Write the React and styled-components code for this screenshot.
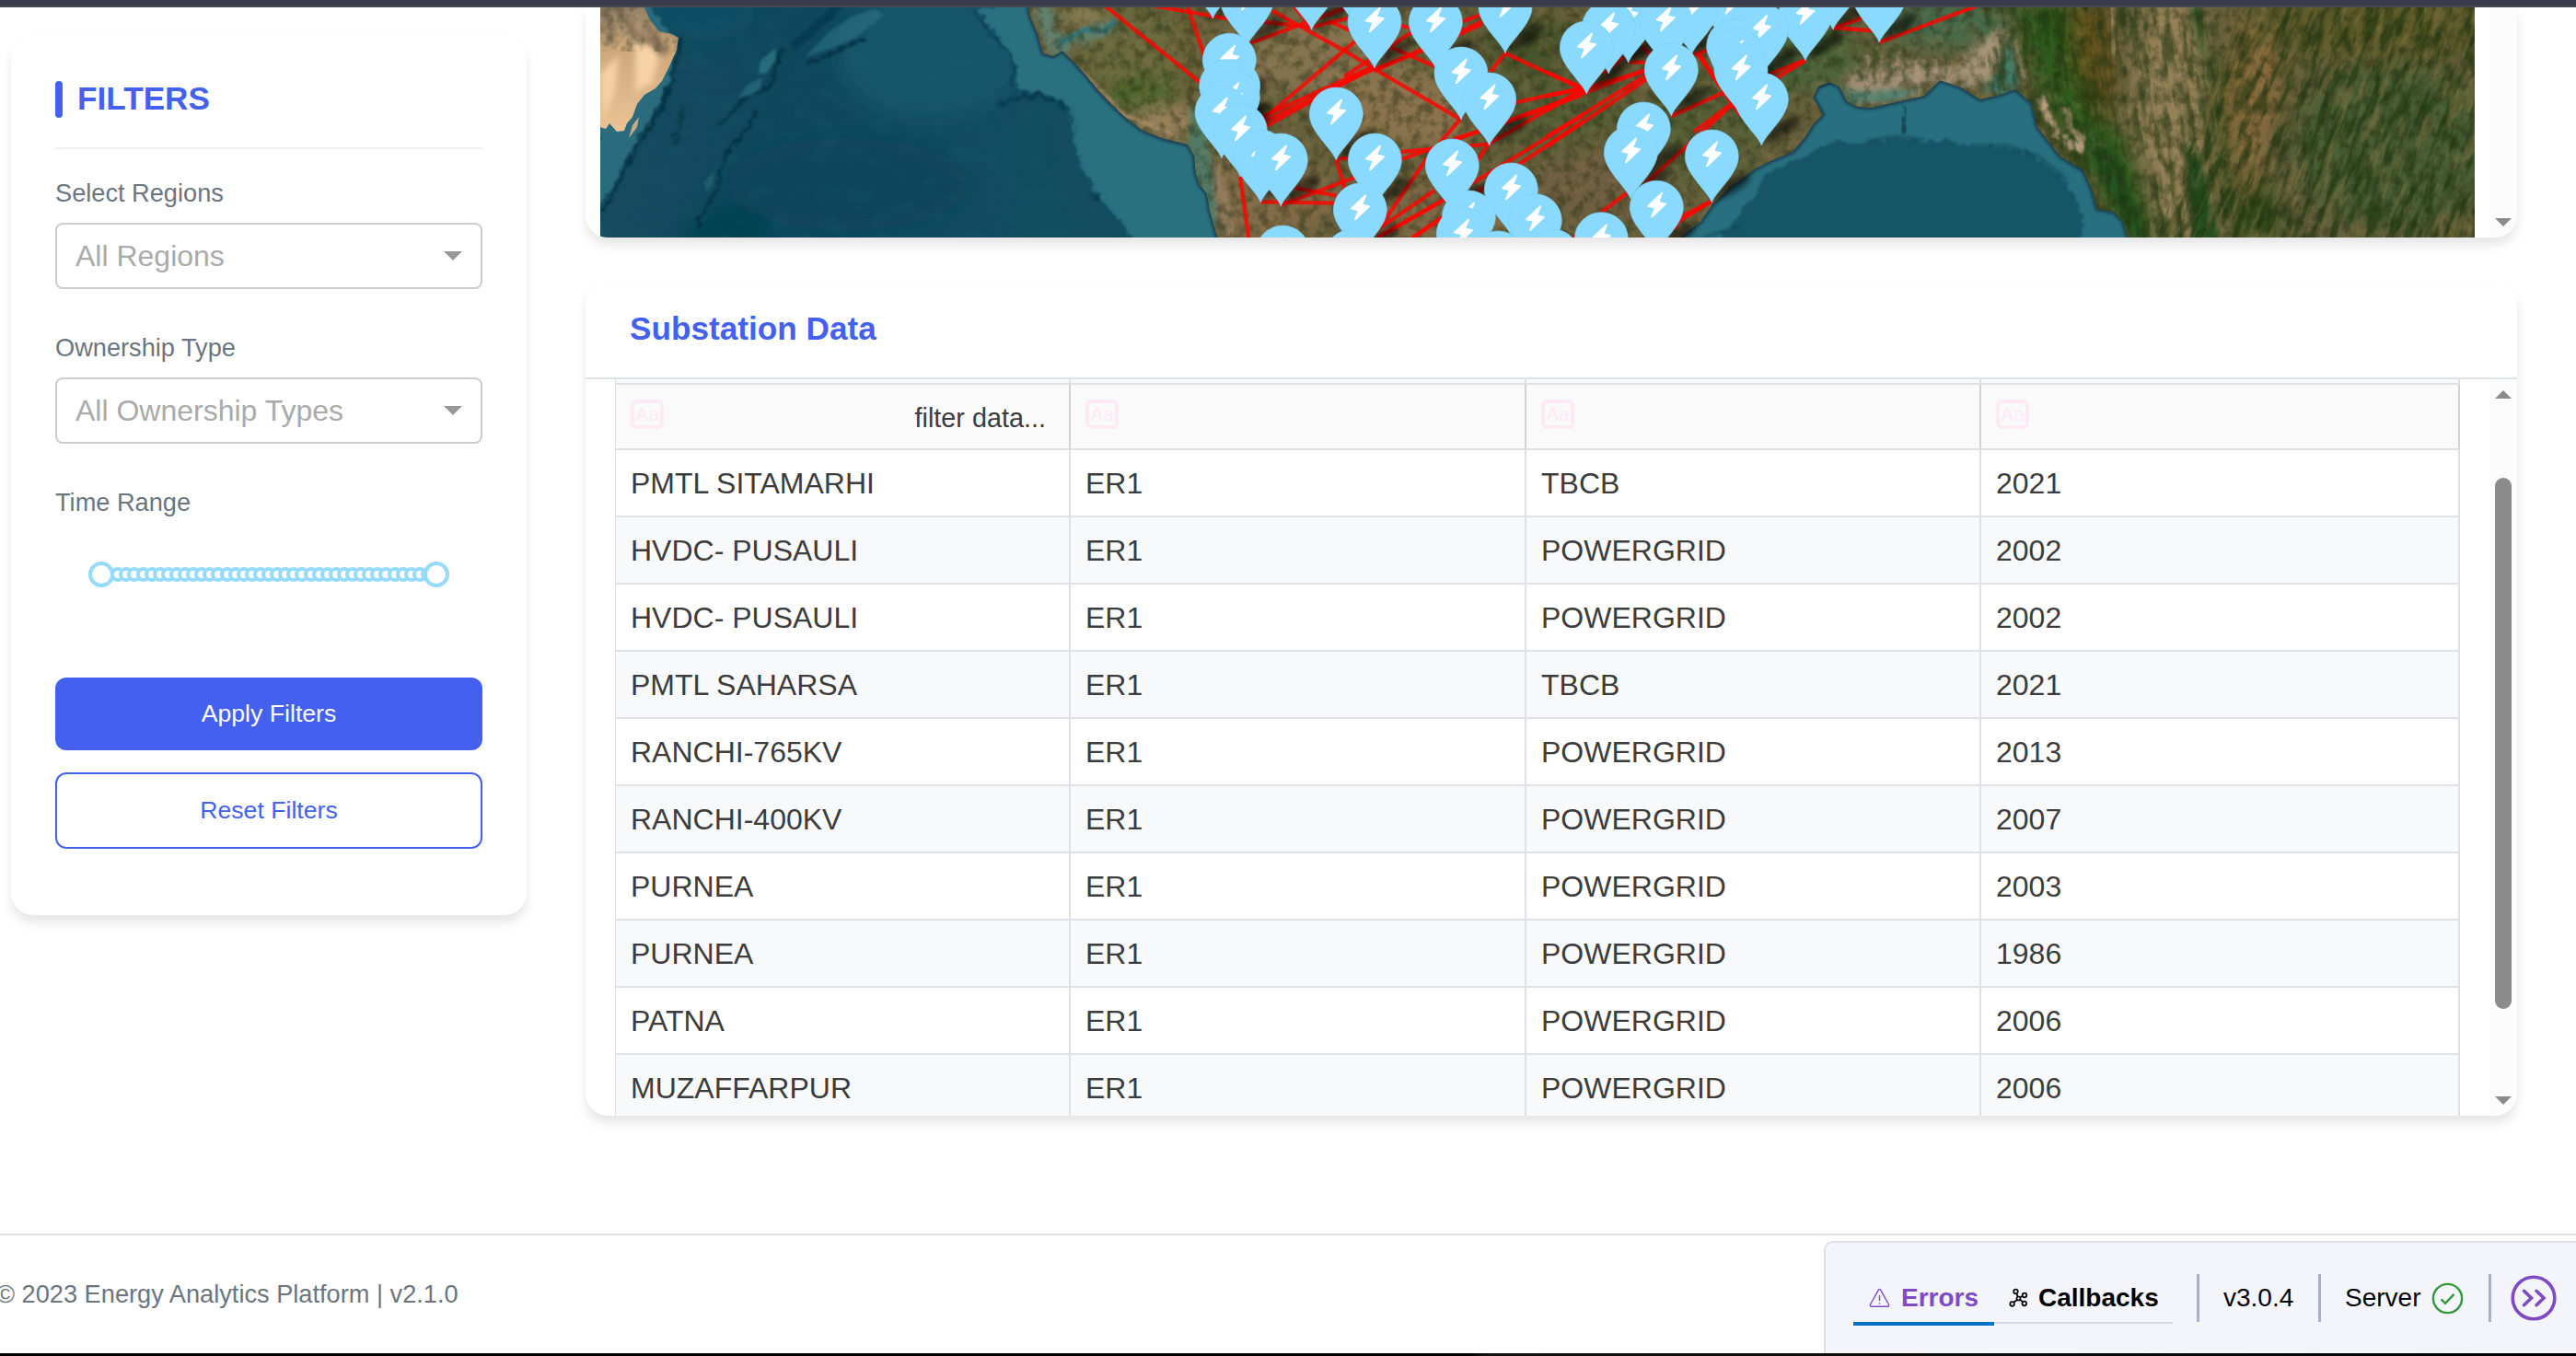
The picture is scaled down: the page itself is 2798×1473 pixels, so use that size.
import React from "react";
import styled, { createGlobalStyle, css } from "styled-components";

const Global = createGlobalStyle`
  * { box-sizing: border-box; }
  html, body { margin: 0; background: #fff; overflow: hidden; }
  body { font-family: "Liberation Sans", Arial, sans-serif; color: #3c3c3c; }
`;

const Page = styled.div`
  position: relative;
  display: flex;
  flex-direction: column;
  width: 2798px;
  height: 1473px;
  overflow: hidden;
  background: #fff;
`;
const TopBar = styled.header`
  flex: none;
  height: 8px;
  background: #383a4d;
  border-bottom: 2px solid #46464f;
  z-index: 2;
`;
const Content = styled.main`
  flex: none;
  display: flex;
  align-items: flex-start;
  gap: 64px;
  height: 1332px;
  padding-left: 12px;
`;
const cardShadow = css`
  background: #fff;
  box-shadow: 0 8px 12px rgba(0, 0, 0, 0.1);
`;
const Sidebar = styled.aside`
  ${cardShadow}
  display: flex;
  flex-direction: column;
  width: 560px;
  margin-top: 32px;
  padding: 48px 48px 72px;
  border-radius: 24px;
`;
const SidebarTitle = styled.div`
  display: flex;
  align-items: center;
  gap: 16px;
  height: 74px;
  padding-bottom: 32px;
  border-bottom: 2px solid #f0f0f0;
  margin-bottom: 32px;
`;
const TitleMark = styled.span`
  width: 8px;
  height: 40px;
  border-radius: 4px;
  background: #4361ee;
`;
const Heading = styled.h2`
  margin: 0;
  font-size: 35.2px;
  line-height: 38px;
  font-weight: 700;
  color: #4361ee;
`;
const SidebarHeading = styled(Heading)`
  padding-bottom: 2px;
`;
const Label = styled.label`
  font-size: 27.2px;
  line-height: 32px;
  color: #6c757d;
`;
const Select = styled.div`
  display: flex;
  align-items: center;
  justify-content: space-between;
  height: 72px;
  margin: 16px 0 48px;
  padding: 0 20px;
  border: 2px solid #ccc;
  border-radius: 8px;
  font-size: 32px;
  color: #aaa;
`;
const Caret = styled.span`
  border: 10px solid transparent;
  border-top-color: #999;
  border-bottom: 0;
`;
const Slider = styled.div`
  position: relative;
  height: 28px;
  margin: 48px 50px 98px;
`;
const Dot = styled.span`
  position: absolute;
  top: 6px;
  width: 16px;
  height: 16px;
  margin-left: -8px;
  border: 4px solid #96dbfa;
  border-radius: 50%;
  background: #fff;
`;
const Handle = styled(Dot)`
  top: 0;
  width: 28px;
  height: 28px;
  margin-left: -14px;
`;
const Button = styled.button`
  height: ${(p) => (p.$outline ? 83 : 79)}px;
  padding: 0;
  margin-bottom: ${(p) => (p.$outline ? 0 : 24)}px;
  border: ${(p) => (p.$outline ? "2px solid #4361ee" : "0")};
  border-radius: 12px;
  background: ${(p) => (p.$outline ? "#fff" : "#4361ee")};
  color: ${(p) => (p.$outline ? "#4361ee" : "#fff")};
  font-family: inherit;
  font-size: 26.667px;
`;
const MainColumn = styled.section`
  display: flex;
  flex-direction: column;
  gap: 48px;
  width: 2098px;
`;
const MapCard = styled.section`
  ${cardShadow}
  display: flex;
  justify-content: space-between;
  height: 250px;
  padding-left: 16px;
  border-radius: 0 0 24px 24px;
  overflow: hidden;
`;
const MapArt = styled.svg`
  display: block;
  width: 2036px;
  height: 250px;
`;
const DataCard = styled.section`
  ${cardShadow}
  display: flex;
  flex-direction: column;
  height: 906px;
  border-radius: 24px;
  overflow: hidden;
`;
const DataHeader = styled.div`
  flex: none;
  display: flex;
  align-items: center;
  height: 106px;
  padding: 0 48px 2px;
  border-bottom: 2px solid #dee2e6;
`;
const DataBody = styled.div`
  display: flex;
  justify-content: space-between;
  flex: 1;
  min-height: 0;
  padding-left: 32px;
`;
const Table = styled.div`
  width: 2004px;
  overflow: hidden;
  border-left: 1px solid #dee2e6;
`;
const Row = styled.div`
  display: grid;
  grid-template-columns: 494px 495px 494px 520px;
  height: ${(p) => p.$height || 73}px;
  background: ${(p) => p.$bg || "#fff"};
`;
const Cell = styled.div`
  display: flex;
  align-items: center;
  padding-left: 16px;
  border-right: 2px solid ${(p) => (p.$filter ? "#d3d3d3" : "#dee2e6")};
  border-bottom: 2px solid #dee2e6;
  font-size: 32px;
  line-height: 36px;
  white-space: nowrap;
`;
const FilterCell = styled(Cell)`
  justify-content: space-between;
  padding-right: 25px;
`;
const CaseToggle = styled.span`
  width: 36px;
  height: 32px;
  margin-bottom: 6px;
  border: 4px solid #fdeaf3;
  border-radius: 7px;
  color: #fdeaf3;
  font-size: 21px;
  line-height: 23px;
  text-align: center;
`;
const FilterHint = styled.span`
  font-size: 28.8px;
  padding-top: 2px;
`;
const ScrollTrack = styled.div`
  display: flex;
  flex-direction: column;
  align-items: center;
  justify-content: ${(p) => (p.$end ? "flex-end" : "space-between")};
  width: 30px;
  padding: 12px 0;
  background: #fcfcfc;
`;
const Arrow = styled.span`
  border: 9px solid transparent;
  ${(p) => (p.$up ? "border-bottom-color: #8b8b8b; border-top: 0;" : "border-top-color: #8b8b8b; border-bottom: 0;")}
`;
const Thumb = styled.span`
  width: 18px;
  height: 577px;
  margin-top: -10px;
  border-radius: 9px;
  background: #8b8b8b;
`;
const Footer = styled.footer`
  flex: none;
  height: 130px;
  padding-top: 49px;
  margin-left: -4px;
  border-top: 2px solid #dee2e6;
  font-size: 27.2px;
  line-height: 30px;
  color: #6c757d;
`;
const BottomEdge = styled.div`
  flex: none;
  height: 3px;
  background: linear-gradient(90deg, #000 57%, #14110f 57.6%, #0b0b0b 80%, #000);
`;
const DevTools = styled.nav`
  position: absolute;
  right: 0;
  bottom: 3px;
  display: flex;
  align-items: flex-start;
  width: 817px;
  height: 122px;
  padding: 34px 0 0 30px;
  border: solid #dcdeec;
  border-width: 2px 0 0 2px;
  border-top-left-radius: 10px;
  background: #f4f5fa;
  font-size: 28px;
  line-height: 52px;
  color: #000;
  white-space: nowrap;
`;
const Tab = styled.div`
  display: flex;
  align-items: center;
  gap: ${(p) => (p.$active ? 12 : 11)}px;
  width: ${(p) => (p.$active ? 153 : 194)}px;
  height: ${(p) => (p.$active ? 56 : 54)}px;
  padding-left: ${(p) => (p.$active ? 17 : 16)}px;
  border-bottom: ${(p) => (p.$active ? "4px solid #0071c9" : "2px solid #d2d7e7")};
  font-weight: 700;
  color: ${(p) => (p.$active ? "#7f4bc4" : "#000")};
`;
const Divider = styled.span`
  width: 3px;
  height: 52px;
  margin: 0 26px;
  background: #a9b0cc;
`;
const Version = styled.span`
  width: 77px;
`;
const Server = styled.span`
  display: flex;
  align-items: center;
  gap: 12px;
  width: 130px;
`;
const Expand = styled.span`
  display: flex;
  height: 52px;
  align-items: center;
  margin-left: -5px;
`;

const ROWS = [
  ["PMTL SITAMARHI", "ER1", "TBCB", "2021"],
  ["HVDC- PUSAULI", "ER1", "POWERGRID", "2002"],
  ["HVDC- PUSAULI", "ER1", "POWERGRID", "2002"],
  ["PMTL SAHARSA", "ER1", "TBCB", "2021"],
  ["RANCHI-765KV", "ER1", "POWERGRID", "2013"],
  ["RANCHI-400KV", "ER1", "POWERGRID", "2007"],
  ["PURNEA", "ER1", "POWERGRID", "2003"],
  ["PURNEA", "ER1", "POWERGRID", "1986"],
  ["PATNA", "ER1", "POWERGRID", "2006"],
  ["MUZAFFARPUR", "ER1", "POWERGRID", "2006"],
];

// Pin tips, in thirds of a pixel, relative to the west and the east origin.
const WEST = 1270;
const EAST = 1680;
const PINS = [
  [WEST, 142, 60], [WEST, 464, 97], [WEST, 627, 108], [EAST, 933, 97], [EAST, 1084, 138],
  [WEST, 253, 150], [EAST, 600, 163], [WEST, 1095, 173], [EAST, 472, 178], [EAST, 843, 197],
  [EAST, 266, 204], [WEST, 669, 222], [WEST, 868, 222], [EAST, 202, 240], [EAST, 387, 219],
  [EAST, 700, 248], [EAST, 608, 300], [EAST, 130, 306], [EAST, 621, 330], [WEST, 196, 346],
  [EAST, 633, 378], [EAST, 406, 378], [WEST, 951, 390], [WEST, 209, 431], [WEST, 185, 431],
  [WEST, 208, 468], [WEST, 1043, 474], [EAST, 700, 474], [WEST, 171, 516], [WEST, 544, 522],
  [EAST, 316, 570], [WEST, 232, 576], [EAST, 274, 648], [WEST, 298, 660], [EAST, 538, 660],
  [WEST, 670, 672], [WEST, 364, 672], [WEST, 922, 690], [WEST, 1114, 768], [EAST, 358, 826],
  [WEST, 622, 834], [WEST, 976, 858], [WEST, 1192, 869], [WEST, 958, 912], [EAST, 178, 929],
  [WEST, 370, 972], [WEST, 595, 984], [WEST, 1250, 984], [WEST, 1072, 990],
];
const WEST_LINES = [
  "-45,20 195,62", "60,20 115,185", "-210,18 100,268", "265,140 580,24", "310,72 464,88 580,60",
  "335,35 570,165 669,225 948,388", "405,20 464,85", "520,68 590,100", "605,135 310,385",
  "669,215 300,382", "669,222 300,402", "650,226 300,420", "669,232 1020,70", "570,250 790,105",
  "570,262 840,160 1020,78", "955,70 1020,47", "725,155 865,215", "755,85 790,90",
  "1095,173 1345,290", "1095,173 1045,235", "948,388 880,468 830,530 680,750",
  "1125,335 1345,287", "1360,300 1100,395 755,520", "1345,292 1040,470 1005,522", "755,495 1040,470",
  "1345,310 1060,412 930,452", "1350,375 1000,590 680,774", "1350,395 1010,622 795,774",
  "890,655 680,774", "865,620 690,740", "890,710 790,776", "544,521 572,615", "544,518 600,515",
  "300,658 540,662", "410,612 545,638", "364,668 605,578", "231,576 260,780",
];
const EAST_LINES = [
  "0,235 130,292", "0,312 130,288", "0,350 130,293", "320,232 130,285 0,360", "320,228 130,300",
  "320,248 0,445", "330,255 0,478", "490,172 630,375", "500,180 560,275", "480,178 520,165",
  "406,378 580,300 843,195", "843,197 600,345 320,600", "600,340 480,430", "260,630 180,690",
  "538,655 425,725 418,748", "538,655 430,710", "933,90 1060,100", "933,92 1025,60",
  "1084,138 1400,20", "270,203 320,203", "310,150 340,180", "250,186 185,240", "100,765 80,778",
];

const WEST_COAST = "M1116 0 L1119 18 1127 37 1133 58 1144 61 1154 55 1165 66 1180 82 1192 97 1208 114 1222 127 1240 141 1262 150 1290 157 1297 169 1299 188 1303 200 1311 210 1314 228 1323 260";
const INDIA = WEST_COAST + " L1823 260 1835 250 1847 241 1860 222 1880 203 1907 183 1925 174 1947 165 1960 150 1970 134 1980 124 1969 106 1975 94 1987 89 1998 94 2006 110 2018 116 2033 117 2063 110 2090 104 2107 87 2130 95 2151 108 2172 103 2189 97 2207 112 2213 138 2238 170 2263 185 2272 205 2278 227 2296 230 2306 240 2312 260 L2690 260 2690 0 Z";

const Terrain = () => (
  <>
    <defs>
      <clipPath id="landClip"><path d={INDIA} /></clipPath>
      <clipPath id="arabiaClip"><path d="M652 0 L700 8 706 22 716 34 730 37 737 41 735 54 728 70 719 88 712 96 700 103 692 113 687 127 681 134 678 142 670 143 662 134 658 140 652 138Z" /></clipPath>
      <linearGradient id="sea" x1="0" y1="0" x2="1" y2="0">
        <stop offset="0" stopColor="#164b5f" />
        <stop offset=".1" stopColor="#0f475c" />
        <stop offset=".2" stopColor="#124b5f" />
        <stop offset=".32" stopColor="#14505f" />
        <stop offset="1" stopColor="#185364" />
      </linearGradient>
      <linearGradient id="sand" x1="0" y1="0" x2="0" y2="1">
        <stop offset="0" stopColor="#8b7a66" />
        <stop offset=".35" stopColor="#cda77b" />
        <stop offset="1" stopColor="#ecc496" />
      </linearGradient>
      <filter id="b2" x="-30%" y="-30%" width="160%" height="160%"><feGaussianBlur stdDeviation="1.6" /></filter>
      <filter id="b3" x="-30%" y="-30%" width="160%" height="160%"><feGaussianBlur stdDeviation="3" /></filter>
      <filter id="b12" x="-60%" y="-60%" width="220%" height="220%"><feGaussianBlur stdDeviation="11" /></filter>
      <filter id="rough" x="-10%" y="-10%" width="120%" height="120%">
        <feTurbulence type="fractalNoise" baseFrequency=".12" numOctaves="3" seed="4" result="n" />
        <feDisplacementMap in="SourceGraphic" in2="n" scale="12" xChannelSelector="R" yChannelSelector="G" />
        <feGaussianBlur stdDeviation=".9" />
      </filter>
      <filter id="soft" x="-10%" y="-10%" width="120%" height="120%">
        <feGaussianBlur stdDeviation="5" result="s" />
        <feTurbulence type="fractalNoise" baseFrequency=".08" numOctaves="3" seed="9" result="n" />
        <feDisplacementMap in="s" in2="n" scale="16" xChannelSelector="R" yChannelSelector="G" />
      </filter>
      <filter id="darkNoise" x="0" y="0" width="100%" height="100%" colorInterpolationFilters="sRGB">
        <feTurbulence type="fractalNoise" baseFrequency=".09 .08" numOctaves="5" seed="8" />
        <feColorMatrix values="0 0 0 0 .13  0 0 0 0 .17  0 0 0 0 .06  3.2 0 0 0 -1.35" />
      </filter>
      <filter id="lightNoise" x="0" y="0" width="100%" height="100%" colorInterpolationFilters="sRGB">
        <feTurbulence type="fractalNoise" baseFrequency=".06 .08" numOctaves="5" seed="21" />
        <feColorMatrix values="0 0 0 0 .62  0 0 0 0 .5  0 0 0 0 .34  0 3.2 0 0 -1.5" />
      </filter>
      <filter id="ridgeNoise" x="0" y="0" width="100%" height="100%" colorInterpolationFilters="sRGB">
        <feTurbulence type="fractalNoise" baseFrequency=".11 .025" numOctaves="4" seed="13" />
        <feColorMatrix values="0 0 0 0 .1  0 0 0 0 .2  0 0 0 0 .05  0 4 0 0 -1.7" />
      </filter>
      <filter id="ridgeLight" x="0" y="0" width="100%" height="100%" colorInterpolationFilters="sRGB">
        <feTurbulence type="fractalNoise" baseFrequency=".1 .022" numOctaves="4" seed="31" />
        <feColorMatrix values="0 0 0 0 .55  0 0 0 0 .47  0 0 0 0 .28  0 5 0 0 -2.6" />
      </filter>
      <filter id="seaNoise" x="0" y="0" width="100%" height="100%" colorInterpolationFilters="sRGB">
        <feTurbulence type="fractalNoise" baseFrequency=".035 .05" numOctaves="5" seed="3" />
        <feColorMatrix values="0 0 0 0 .15  0 0 0 0 .42  0 0 0 0 .48  2.4 0 0 0 -1.05" />
      </filter>
    </defs>
    <rect x="652" y="0" width="2036" height="260" fill="url(#sea)" />
    <g filter="url(#b12)">
      <ellipse cx="790" cy="250" rx="45" ry="26" fill="#00434f" />
      <ellipse cx="1010" cy="60" rx="100" ry="70" fill="#17556a" />
      <ellipse cx="760" cy="15" rx="60" ry="30" fill="#114d64" />
      <ellipse cx="920" cy="200" rx="130" ry="50" fill="#0e455a" />
    </g>
    <rect x="652" y="0" width="680" height="260" filter="url(#seaNoise)" opacity=".16" />

    <path d="M700 0 L732 40 736 60 728 90 710 125 688 155 676 180 664 205 650 218 650 120Z" fill="#2a6c7d" filter="url(#rough)" />
    <g filter="url(#rough)" fill="none" stroke="#062e3d" strokeLinejoin="round">
      <path d="M740 40 L733 70 722 110 706 140 688 165 676 190 664 215 650 235" strokeWidth="4" opacity=".75" />
      <path d="M742 118 L738 140 732 158" strokeWidth="3" opacity=".55" />
      <path d="M912 6 L880 35 862 50" strokeWidth="9" stroke="#05384f" opacity=".65" />
      <path d="M848 56 L842 78 836 95 808 108 792 125 782 136" strokeWidth="4" opacity=".8" />
      <path d="M938 42 L905 58 876 68" strokeWidth="4" opacity=".75" />
      <path d="M824 118 L805 148 790 166 784 182 780 205 768 222 757 248" strokeWidth="3.5" opacity=".75" />
      <path d="M1060 14 L1078 38 1096 55 1102 75 1098 95" strokeWidth="2.5" opacity=".5" />
      <path d="M1085 114 L1105 106 1130 104 1150 112 1158 120" strokeWidth="3.5" opacity=".6" />
      <path d="M1180 212 L1200 219 1212 221" strokeWidth="3" opacity=".6" />
    </g>
    <g filter="url(#b2)" fill="#2f7a8a">
      <path d="M874 62 L900 35 925 18 950 10 960 16 930 40 900 54Z" opacity=".5" />
      <path d="M843 52 L826 66 824 80 832 80 842 66Z" opacity=".75" />
      <path d="M828 84 L812 92 802 106 815 104 826 96Z" opacity=".55" />
      <path d="M776 186 L764 198 768 208 774 200Z" opacity=".45" />
    </g>
    <path d="M1062 10 L1125 0 1335 150 1330 270 1236 270 1215 238 1188 207 1175 185 1166 150 1162 118 1140 102 1106 96 1104 68 1085 40Z" fill="#2a7180" filter="url(#rough)" />
    <path d="M1162 122 L1164 165 1186 212 1226 262 1190 262 1150 190 1145 120Z" fill="#164e60" filter="url(#soft)" opacity=".8" />

    <g clipPath="url(#arabiaClip)">
      <rect x="652" y="0" width="90" height="145" fill="url(#sand)" />
      <path d="M652 80 L672 60 668 100 655 130Z M690 40 L718 56 708 90 690 100Z" fill="#f5d2a5" filter="url(#b3)" />
      <path d="M652 8 L665 30 660 48 M670 8 L690 38 712 48 718 60 M700 25 L725 58" stroke="#6b5c4b" strokeWidth="6" fill="none" filter="url(#b3)" opacity=".75" />
      <rect x="652" y="0" width="90" height="56" filter="url(#darkNoise)" opacity=".3" />
    </g>
    <path d="M683 150 L687 136 694 127 692 138Z" fill="#c9a987" />

    <path d="M1823 260 L1847 235 1900 185 1960 150 1965 100 2000 88 2110 85 2200 95 2235 160 2290 215 2320 260Z" fill="#28707f" />
    <path d="M1864 266 L1887 235 1911 205 1918 187 1965 168 1993 153 2025 155 2057 150 2085 153 2113 152 2145 160 2180 160 2205 168 2229 182 2247 202 2262 233 2260 266Z" fill="#195566" filter="url(#rough)" />
    <path d="M2070 115 L2066 146" stroke="#0a3442" strokeWidth="4" fill="none" opacity=".7" filter="url(#rough)" />
    <path d="M1890 246 L1850 258 M2026 154 L2060 148 2090 152 M2140 158 L2180 158 2215 170 2245 195" stroke="#0d3f50" strokeWidth="4" fill="none" opacity=".45" filter="url(#b2)" />

    <path d={INDIA} fill="#17414a" stroke="#123648" strokeWidth="5" opacity=".8" filter="url(#b2)" />
    <g clipPath="url(#landClip)">
      <rect x="1100" y="0" width="1590" height="260" fill="#66603c" />
      <g filter="url(#b12)">
        <ellipse cx="1235" cy="60" rx="60" ry="50" fill="#6a6b3c" />
        <ellipse cx="1240" cy="102" rx="42" ry="18" fill="#446327" />
        <ellipse cx="1270" cy="132" rx="40" ry="16" fill="#a08661" />
        <ellipse cx="1295" cy="60" rx="18" ry="50" fill="#6b6238" />
        <ellipse cx="1175" cy="14" rx="26" ry="12" fill="#8f8654" />
        <ellipse cx="1425" cy="60" rx="110" ry="42" fill="#84734f" />
        <ellipse cx="1530" cy="120" rx="90" ry="42" fill="#8a734e" />
        <ellipse cx="1370" cy="215" rx="80" ry="45" fill="#836c48" />
        <ellipse cx="1680" cy="120" rx="90" ry="40" fill="#565d36" />
        <ellipse cx="1660" cy="50" rx="50" ry="30" fill="#46532a" />
        <ellipse cx="1560" cy="230" rx="90" ry="40" fill="#7a6844" />
        <ellipse cx="1740" cy="200" rx="70" ry="35" fill="#705f42" />
        <ellipse cx="1850" cy="140" rx="70" ry="60" fill="#586039" />
        <ellipse cx="1960" cy="60" rx="60" ry="40" fill="#486338" />
        <ellipse cx="2110" cy="25" rx="70" ry="26" fill="#456b48" />
        <path d="M2185 0 H2250 L2265 80 2310 150 2350 260 H2310 L2270 190 2220 110 2200 60Z" fill="#2d5c1c" />
        <path d="M2250 0 H2290 L2300 100 2285 140 2255 70Z" fill="#66521f" />
        <path d="M2330 0 H2385 L2400 120 2395 200 2430 262 H2345 L2335 190 2308 130Z" fill="#958158" />
        <path d="M2390 30 L2400 150 2420 260 H2480 L2440 100Z" fill="#3d5424" />
        <path d="M2430 10 L2475 30 2480 100 2440 230 2415 120Z" fill="#8a6a3c" />
        <ellipse cx="2580" cy="25" rx="140" ry="40" fill="#5f5c2a" />
        <ellipse cx="2600" cy="160" rx="110" ry="90" fill="#4b5e35" />
      </g>
      <path d="M1290 157 L1296 112 1308 120 1320 200 1322 240 1318 262 1300 262Z" fill="#4f7a66" filter="url(#b3)" />
      <path d="M1120 0 L1140 58 1154 54 1175 45 1200 42 1212 25 1195 22 1165 40 1148 34 1140 8Z" fill="#5f8474" filter="url(#soft)" />
      <path d="M1150 48 L1178 32 1200 34 1212 22" stroke="#33787c" strokeWidth="6" fill="none" filter="url(#b2)" />
      <path d="M1160 68 L1190 92 1220 124 1280 148" stroke="#a98c68" strokeWidth="4" fill="none" filter="url(#b2)" />
      <path d="M1318 180 L1330 220 1338 258" stroke="#a58c74" strokeWidth="7" fill="none" filter="url(#soft)" />
      <path d="M2008 78 L2120 68 2130 92 2100 92 2062 106 2020 112 2000 90Z" fill="#a08e74" filter="url(#soft)" />
      <g fill="none" strokeWidth="3" filter="url(#rough)" opacity=".75">
        <path d="M2020 56 V88 M2036 50 V92 M2052 52 V84 M2070 56 V88 M2094 60 V84 M2112 56 V78" stroke="#3a5533" />
        <path d="M2028 60 V90 M2044 58 V90 M2062 58 V90 M2082 62 V88 M2104 62 V84" stroke="#b09c82" />
      </g>
      <path d="M2174 30 L2180 60 2160 92 2128 90 2118 74 2138 62 2148 46Z" fill="#ab9a80" filter="url(#soft)" opacity=".9" />
      <path d="M2182 38 L2194 98 2172 102 2152 98 2172 78Z M1998 90 L2010 113 2060 108 2090 96 2060 98 2015 100Z" fill="#34867c" filter="url(#b3)" opacity=".75" />
      <path d="M2188 38 L2192 62 2198 85" stroke="#b7a58d" strokeWidth="3" fill="none" filter="url(#b2)" />
      <path d="M2214 106 L2224 124 2236 148 M2244 116 L2250 140 2262 152 2258 166 M2240 150 L2262 164" stroke="#b79d80" strokeWidth="8" fill="none" filter="url(#rough)" />
      <path d="M2375 150 L2382 260 H2412 L2392 180Z M2262 130 L2300 170 2332 260 H2318 L2280 190Z M2380 8 L2394 70 2388 8Z" fill="#255220" filter="url(#b3)" />
      <path d="M2294 8 L2297 60" stroke="#a18b62" strokeWidth="5" fill="none" filter="url(#b2)" />
      <rect x="1100" y="0" width="1590" height="260" filter="url(#darkNoise)" opacity=".42" />
      <rect x="1100" y="0" width="1190" height="260" filter="url(#lightNoise)" opacity=".22" />
      <g transform="rotate(-8 2300 130)">
        <rect x="2170" y="-60" width="240" height="420" filter="url(#ridgeNoise)" opacity=".5" />
      </g>
      <g transform="rotate(20 2550 130)">
        <rect x="2400" y="-120" width="330" height="500" filter="url(#ridgeNoise)" opacity=".6" />
        <rect x="2400" y="-120" width="330" height="500" filter="url(#ridgeLight)" opacity=".4" />
      </g>
    </g>
  </>
);

const Pin = ({ x, y }) => (
  <g transform={`translate(${x} ${y})`}>
    <path d="M0 0 C-4 -12 -29 -31 -29 -50 A29 29 0 0 1 29 -50 C29 -31 4 -12 0 0Z" fill="#8adaff" stroke="#7fd0f8" strokeWidth=".7" />
    <path
      d="M5.8 -65.5 L-9.2 -51.4 L-1.3 -49.8 L-5.2 -39.8 L9.6 -53.8 L1.8 -55.5Z"
      fill="#fff" stroke="#fff" strokeWidth="2" strokeLinejoin="round"
    />
  </g>
);

const PinShadow = ({ x, y }) => (
  <path transform={`translate(${x} ${y})`} d="M0 0 L14 -22 Q34 -36 42 -30 Q42 -20 22 -9Z" fill="#000" opacity=".5" filter="url(#b3)" />
);

const at = ([origin, x, y]) => ({ x: origin + x / 3, y: y / 3 });

const Lines = ({ origin, items }) => (
  <g transform={`translate(${origin} 0) scale(.33333)`} stroke="#ff0500" strokeWidth="13" fill="none">
    {items.map((points) => <polyline key={points} points={points} strokeOpacity=".82" />)}
  </g>
);

const SubstationMap = () => (
  <MapArt viewBox="652 8 2036 250">
    <Terrain />
    <Lines origin={WEST} items={WEST_LINES} />
    <Lines origin={EAST} items={EAST_LINES} />
    {PINS.map((p, i) => <PinShadow key={i} {...at(p)} />)}
    {PINS.map((p, i) => <Pin key={i} {...at(p)} />)}
  </MapArt>
);

const WarningIcon = () => (
  <svg width="23" height="22" viewBox="0 0 23 22" fill="none" stroke="#7f4bc4" strokeWidth="1.4" strokeLinejoin="round" strokeLinecap="round">
    <path d="M10.4 2.2 Q11.5 .6 12.6 2.2 L21.5 18 Q22.2 20.2 20.2 20.3 H2.8 Q.8 20.2 1.5 18Z" />
    <path d="M11.5 8.5 V13.5 M11.5 16.6 V17" />
  </svg>
);
const GraphIcon = () => (
  <svg width="21" height="22" viewBox="0 0 21 22" fill="none" stroke="#000" strokeWidth="1.7">
    <circle cx="7.5" cy="4" r="2.3" />
    <circle cx="17" cy="8" r="2.3" />
    <circle cx="3.6" cy="17.5" r="2.3" />
    <circle cx="16.8" cy="17" r="2.3" />
    <circle cx="10.5" cy="11.5" r="2" />
    <path d="M8.3 6.2 L9.8 9.6 M14.8 8.8 L12.3 10.4 M9 13 L5.2 15.8 M12.3 12.6 L15 15.4" />
  </svg>
);
const CheckIcon = () => (
  <svg width="35" height="35" viewBox="0 0 35 35" fill="none" stroke="#31993a" strokeWidth="2.4">
    <circle cx="17.5" cy="17.5" r="15.6" />
    <path d="M10.5 18.3 L15 22.8 L24.5 12.8" />
  </svg>
);
const ExpandIcon = () => (
  <svg width="50" height="50" viewBox="0 0 50 50" fill="none" stroke="#7f4bc4" strokeWidth="3.6" strokeLinecap="round">
    <circle cx="25" cy="25" r="22.8" />
    <path d="M14.5 17.3 L22.5 25 L14.5 32.7 M28 17.3 L36 25 L28 32.7" />
  </svg>
);

const STEPS = Array.from({ length: 41 }, (_, i) => i * 2.5);

export default function App() {
  return (
    <Page>
      <Global />
      <TopBar />
      <Content>
        <Sidebar>
          <SidebarTitle>
            <TitleMark />
            <SidebarHeading>FILTERS</SidebarHeading>
          </SidebarTitle>
          <Label>Select Regions</Label>
          <Select>All Regions<Caret /></Select>
          <Label>Ownership Type</Label>
          <Select>All Ownership Types<Caret /></Select>
          <Label>Time Range</Label>
          <Slider>
            {STEPS.map((s) => <Dot key={s} style={{ left: `${s}%` }} />)}
            <Handle style={{ left: "0%" }} />
            <Handle style={{ left: "100%" }} />
          </Slider>
          <Button>Apply Filters</Button>
          <Button $outline>Reset Filters</Button>
        </Sidebar>
        <MainColumn>
          <MapCard>
            <SubstationMap />
            <ScrollTrack $end><Arrow /></ScrollTrack>
          </MapCard>
          <DataCard>
            <DataHeader><Heading>Substation Data</Heading></DataHeader>
            <DataBody>
              <Table>
                <Row $height={6} $bg="#f8f9fb"><Cell /><Cell /><Cell /><Cell /></Row>
                <Row $height={71} $bg="#fafafa">
                  {[0, 1, 2, 3].map((i) => (
                    <FilterCell key={i} $filter>
                      <CaseToggle>Aa</CaseToggle>
                      {i === 0 && <FilterHint>filter data...</FilterHint>}
                    </FilterCell>
                  ))}
                </Row>
                {ROWS.map((row, i) => (
                  <Row key={i} $bg={i % 2 ? "#f8f9fb" : "#fff"}>
                    {row.map((value, j) => <Cell key={j}>{value}</Cell>)}
                  </Row>
                ))}
              </Table>
              <ScrollTrack>
                <Arrow $up />
                <Thumb />
                <Arrow />
              </ScrollTrack>
            </DataBody>
          </DataCard>
        </MainColumn>
      </Content>
      <Footer>© 2023 Energy Analytics Platform | v2.1.0</Footer>
      <BottomEdge />
      <DevTools>
        <Tab $active><WarningIcon />Errors</Tab>
        <Tab><GraphIcon />Callbacks</Tab>
        <Divider />
        <Version>v3.0.4</Version>
        <Divider />
        <Server>Server<CheckIcon /></Server>
        <Divider />
        <Expand><ExpandIcon /></Expand>
      </DevTools>
    </Page>
  );
}
